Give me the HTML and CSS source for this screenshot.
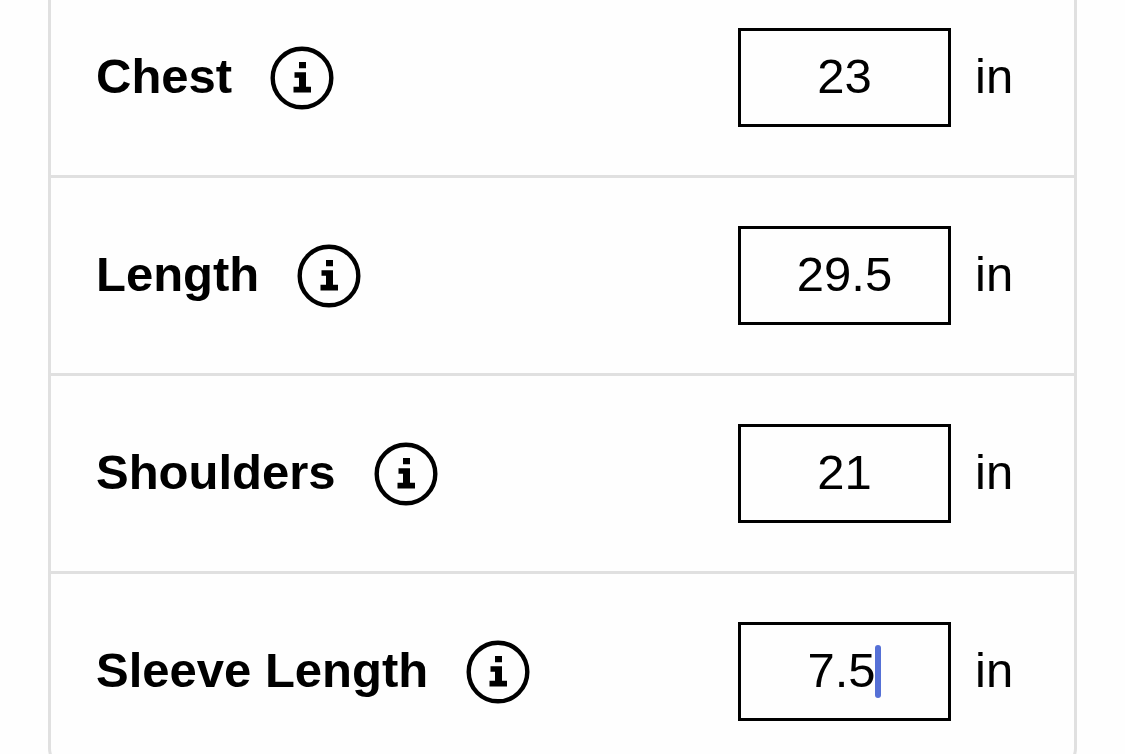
FILE: index.html
```html
<!DOCTYPE html>
<html lang="en">
<head>
  <meta charset="UTF-8">
  <meta name="viewport" content="width=device-width, initial-scale=1.0">
  <title>Measurements</title>
  <link rel="stylesheet" href="styles.css">
</head>
<body>

  <!-- Info icon shared by all rows -->
  <svg class="sprite" aria-hidden="true">
    <symbol id="info" viewBox="0 0 64 64">
      <circle cx="32" cy="32" r="29.3" fill="none" stroke="currentColor" stroke-width="4.4"/>
      <path d="M29 16h7v6.2h-7zM24.5 26.3h11.5v14.5h5v5.7h-17.5v-5.7h5.5v-9h-4.5z" fill="currentColor"/>
    </symbol>
  </svg>

  <form class="measurements">
    <div class="row">
      <label class="name" for="chest">Chest</label>
      <button class="info" type="button" aria-label="About chest"><svg><use href="#info"/></svg></button>
      <div class="field"><input id="chest" type="text" inputmode="decimal" value="23"></div>
      <span class="unit">in</span>
    </div>

    <div class="row">
      <label class="name" for="length">Length</label>
      <button class="info" type="button" aria-label="About length"><svg><use href="#info"/></svg></button>
      <div class="field"><input id="length" type="text" inputmode="decimal" value="29.5"></div>
      <span class="unit">in</span>
    </div>

    <div class="row">
      <label class="name" for="shoulders">Shoulders</label>
      <button class="info" type="button" aria-label="About shoulders"><svg><use href="#info"/></svg></button>
      <div class="field"><input id="shoulders" type="text" inputmode="decimal" value="21"></div>
      <span class="unit">in</span>
    </div>

    <div class="row">
      <label class="name" for="sleeve">Sleeve Length</label>
      <button class="info" type="button" aria-label="About sleeve length"><svg><use href="#info"/></svg></button>
      <div class="field editing"><input id="sleeve" type="text" inputmode="decimal" value="7.5"><span class="caret"></span></div>
      <span class="unit">in</span>
    </div>
  </form>

</body>
</html>
```
FILE: styles.css
```css
* {
  box-sizing: border-box;
}

body {
  margin: 0;
  padding: 0 48px;
  height: 100vh;
  overflow: hidden;
  font-family: "Liberation Sans", Arial, sans-serif;
  font-size: 49px;
  line-height: 60px;
  color: #000;
  background-color: #fefefe;
}

.sprite {
  display: none;
}

/* Card */
.measurements {
  border: 3px solid #e0e0e0;
  border-top: none;
  border-radius: 0 0 24px 24px;
}

.row {
  display: flex;
  align-items: center;
  padding: 48px 48px 48px 45px;
}

.row:first-child {
  padding-top: 28px;
}

.row + .row {
  border-top: 3px solid #e0e0e0;
}

.name {
  font-weight: bold;
  padding-bottom: 4px;
}

.info {
  width: 64px;
  height: 64px;
  margin-left: 38px;
  padding: 0;
  border: none;
  background: none;
  color: inherit;
  cursor: pointer;
}

.info svg {
  display: block;
  width: 100%;
  height: 100%;
}

/* Value box */
.field {
  position: relative;
  width: 213px;
  margin-left: auto;
}

.field input {
  display: block;
  width: 100%;
  height: 99px;
  padding: 0 0 4px;
  border: 3px solid #000;
  border-radius: 0;
  outline: none;
  background-color: #fefefe;
  color: inherit;
  font: inherit;
  text-align: center;
  caret-color: #5570d6;
}

.field.editing input {
  padding-right: 6px;
}

/* Thick rounded cursor after the value */
.caret {
  position: absolute;
  top: 23px;
  left: calc(50% + 30px);
  width: 6px;
  height: 53px;
  border-radius: 3px;
  background-color: #5570d6;
}

.unit {
  width: 51px;
  margin-left: 24px;
  padding-bottom: 4px;
}
```
